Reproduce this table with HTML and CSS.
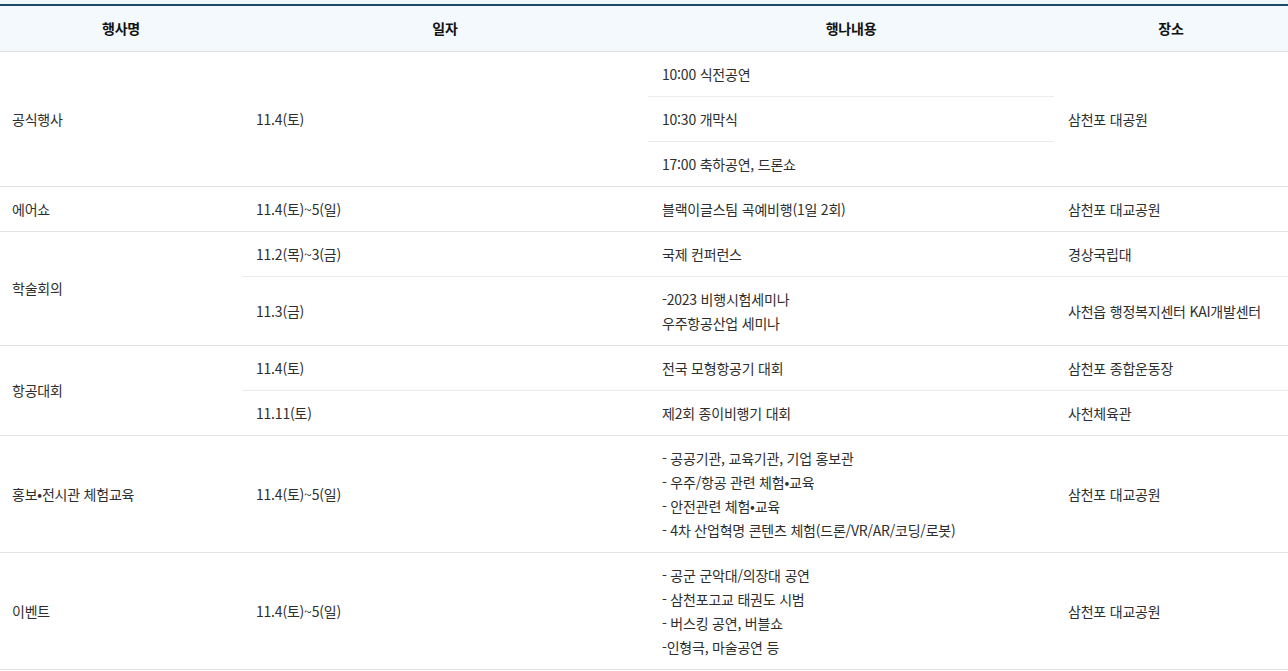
FILE: index.html
```html
<!DOCTYPE html>
<html lang="ko">
<head>
<meta charset="utf-8">
<link rel="stylesheet" href="styles.css">
</head>
<body>
<div class="wrap">
<table class="sched">
<colgroup>
<col class="c1"><col class="c2"><col class="c3"><col class="c4">
</colgroup>
<thead>
<tr><th>행사명</th><th>일자</th><th>행나내용</th><th>장소</th></tr>
</thead>
<tbody>
<tr><td class="name" rowspan="3">공식행사</td><td rowspan="3">11.4(토)</td><td class="sub">10:00 식전공연</td><td rowspan="3">삼천포 대공원</td></tr>
<tr><td class="sub">10:30 개막식</td></tr>
<tr><td>17:00 축하공연, 드론쇼</td></tr>
<tr><td class="name">에어쇼</td><td>11.4(토)~5(일)</td><td>블랙이글스팀 곡예비행(1일 2회)</td><td>삼천포 대교공원</td></tr>
<tr><td class="name" rowspan="2">학술회의</td><td class="sub">11.2(목)~3(금)</td><td class="sub">국제 컨퍼런스</td><td class="sub">경상국립대</td></tr>
<tr><td>11.3(금)</td><td>-2023 비행시험세미나<br>우주항공산업 세미나</td><td>사천읍 행정복지센터 KAI개발센터</td></tr>
<tr><td class="name" rowspan="2">항공대회</td><td class="sub">11.4(토)</td><td class="sub">전국 모형항공기 대회</td><td class="sub">삼천포 종합운동장</td></tr>
<tr><td>11.11(토)</td><td>제2회 종이비행기 대회</td><td>사천체육관</td></tr>
<tr><td class="name">홍보•전시관 체험교육</td><td>11.4(토)~5(일)</td><td>- 공공기관, 교육기관, 기업 홍보관<br>- 우주/항공 관련 체험•교육<br>- 안전관련 체험•교육<br>- 4차 산업혁명 콘텐츠 체험(드론/VR/AR/코딩/로봇)</td><td>삼천포 대교공원</td></tr>
<tr><td class="name">이벤트</td><td>11.4(토)~5(일)</td><td>- 공군 군악대/의장대 공연<br>- 삼천포고교 태권도 시범<br>- 버스킹 공연, 버블쇼<br>-인형극, 마술공연 등</td><td>삼천포 대교공원</td></tr>
</tbody>
</table>
</div>
</body>
</html>
```
FILE: styles.css
```css
html, body {
  margin: 0;
  padding: 0;
  background: #ffffff;
}
body {
  font-family: "Noto Sans CJK KR", "Noto Sans", sans-serif;
  color: #2e2e2e;
}
.wrap {
  padding-top: 4px;
  background: linear-gradient(#eef9fb, #eef9fb) top / 100% 4px no-repeat;
}
.sched {
  width: 1288px;
  border-collapse: collapse;
  table-layout: fixed;
  border-top: 2px solid #1d4a66;
  font-size: 14px;
  letter-spacing: -0.015em;
}
.c1 { width: 242px; }
.c2 { width: 406px; }
.c3 { width: 406px; }
.c4 { width: 234px; }
.sched th {
  height: 46px;
  padding: 0 14px;
  background: #f4f9fd;
  font-weight: 700;
  color: #111111;
  text-align: center;
  border-bottom: 1px solid #dddddd;
  box-sizing: border-box;
}
.sched td {
  padding: 10px 14px;
  line-height: 24px;
  text-align: left;
  vertical-align: middle;
  border-bottom: 1px solid #e2e2e2;
}
.sched td.name {
  padding-left: 12px;
}
.sched td.sub {
  border-bottom: 1px solid #ebebeb;
}
```
